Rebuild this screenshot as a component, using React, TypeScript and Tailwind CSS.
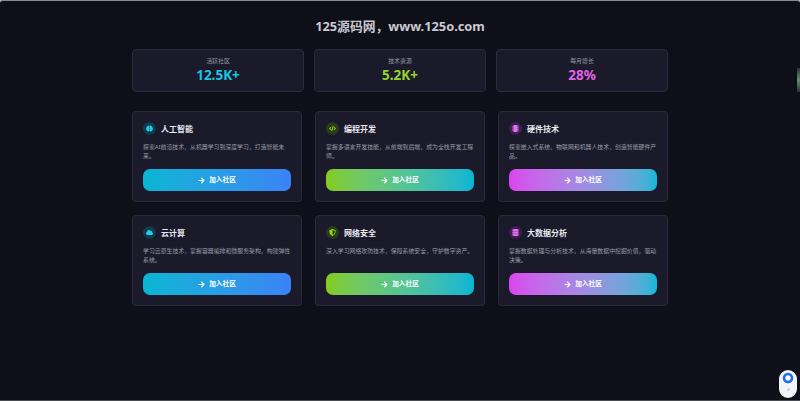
import { FaArrowRight, FaBrain, FaCloud, FaCode, FaDatabase, FaMicrochip, FaShieldAlt } from 'react-icons/fa';

const stats = [
  { label: '活跃社区', value: '12.5K+', color: 'text-[#1cc4e4]' },
  { label: '技术资源', value: '5.2K+', color: 'text-[#98d42a]' },
  { label: '每月增长', value: '28%', color: 'text-[#e063e8]' },
];

const themes = {
  blue: {
    icon: 'bg-[#0d3b4c] text-[#22cdec]',
    button: 'bg-gradient-to-r from-[#06b6d4] to-[#3b82f6]',
  },
  green: {
    icon: 'bg-[#2a3a1c] text-[#8fd61c]',
    button: 'bg-gradient-to-r from-[#84cc16] to-[#06b6d4]',
  },
  purple: {
    icon: 'bg-[#3c1f4f] text-[#e070f0]',
    button: 'bg-gradient-to-r from-[#d946ef] to-[#06b6d4]',
  },
};

const cards = [
  { title: '人工智能', desc: '探索AI前沿技术，从机器学习到深度学习，打造智能未来。', icon: FaBrain, theme: themes.blue },
  { title: '编程开发', desc: '掌握多语言开发技能，从前端到后端，成为全栈开发工程师。', icon: FaCode, theme: themes.green },
  { title: '硬件技术', desc: '探索嵌入式系统、物联网和机器人技术，创造智能硬件产品。', icon: FaMicrochip, theme: themes.purple },
  { title: '云计算', desc: '学习云原生技术，掌握容器编排和微服务架构，构建弹性系统。', icon: FaCloud, theme: themes.blue },
  { title: '网络安全', desc: '深入学习网络攻防技术，保障系统安全，守护数字资产。', icon: FaShieldAlt, theme: themes.green },
  { title: '大数据分析', desc: '掌握数据处理与分析技术，从海量数据中挖掘价值，驱动决策。', icon: FaDatabase, theme: themes.purple },
];

export default function App() {
  return (
    <div className="relative h-[401px] w-[800px] overflow-hidden bg-[#c8c8c8] font-['Noto_Sans','Noto_Sans_CJK_SC',sans-serif]">
      <div className="h-full rounded-t-[3px] border-t border-b border-t-[#8a8a8a] border-b-[#4a4a52] bg-[#0f0f1a]">
        <div className="mx-auto w-[536px] pt-[15px]">
          <h1 className="whitespace-nowrap text-center text-[12.8px] leading-[20px] font-bold text-[#c9c9d1]">
            125源码网，www.125o.com
          </h1>

          <div className="mt-[13px] grid grid-cols-3 gap-[10px]">
            {stats.map(stat => (
              <div key={stat.label} className="flex h-[43px] flex-col items-center rounded-[4px] border border-[#2a2a3a] bg-[#1a1a2a] pt-[7px]">
                <span className="text-[5.9px] leading-[9px] text-[#9a9aa6]">{stat.label}</span>
                <span className={`text-[13.5px] leading-[18px] font-bold ${stat.color}`}>{stat.value}</span>
              </div>
            ))}
          </div>

          <div className="mt-[19px] grid grid-cols-3 gap-[13px]">
            {cards.map(card => (
              <div key={card.title} className="flex h-[91px] flex-col rounded-[4px] border border-[#2a2a3a] bg-[#1a1a2a] px-[10px] pt-[10px]">
                <div className="flex items-center gap-[5px]">
                  <div className={`flex h-[13px] w-[13px] items-center justify-center rounded-full ${card.theme.icon}`}>
                    <card.icon className="h-[7px] w-[7px]" />
                  </div>
                  <h3 className="text-[8px] leading-[13px] font-bold text-[#e8e8ee]">{card.title}</h3>
                </div>
                <p className="mt-[8px] h-[20px] text-[5.9px] leading-[9px] text-[#9a9aa6]">{card.desc}</p>
                <button className={`mt-[6px] flex h-[22px] w-full items-center justify-center gap-[4px] rounded-[7px] text-[6.7px] font-bold text-white ${card.theme.button}`}>
                  <FaArrowRight className="h-[7px] w-[7px]" />
                  加入社区
                </button>
              </div>
            ))}
          </div>
        </div>
      </div>

      {/* sliver of a side widget on the right edge */}
      <div className="absolute top-[68px] right-0 h-[24px] w-[3px] rounded-l-[1px] bg-gradient-to-b from-[#2b3441] via-[#5f8f6a] to-[#2b3441]" />

      {/* floating helper widget, bottom right */}
      <div className="absolute right-[3px] bottom-[3px] flex h-[28px] w-[18px] flex-col items-center rounded-full bg-[#f2f4f7] pt-[2px]">
        <svg viewBox="0 0 12 12" className="h-[12px] w-[12px]">
          <circle cx="6" cy="6" r="4" fill="none" stroke="#1d6ff2" strokeWidth="2.6" />
          <circle cx="6.6" cy="5.4" r="1.6" fill="#ffffff" />
        </svg>
        <div className="mt-[4px] h-[3px] w-[3px] rounded-[1px] bg-[#d4d7dc]" />
      </div>
    </div>
  );
}
